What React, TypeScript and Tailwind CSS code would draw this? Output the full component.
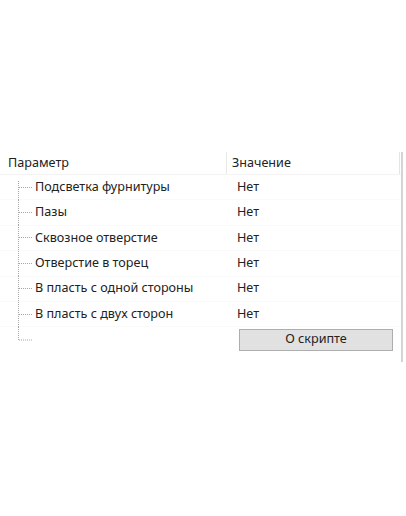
import React from "react"

const rows = [
  "Подсветка фурнитуры",
  "Пазы",
  "Сквозное отверстие",
  "Отверстие в торец",
  "В пласть с одной стороны",
  "В пласть с двух сторон",
]

const font = { fontFamily: '"Noto Sans", "Open Sans", sans-serif' }

// dotted tree connector drawn for one row
function Branch({ first }: { first?: boolean }) {
  return (
    <svg width="34" height="25" className="shrink-0 block">
      <line
        x1="18.5"
        y1={first ? 6 : 0}
        x2="18.5"
        y2={25}
        stroke="#a8a8a8"
        strokeDasharray="1 1"
      />
      <line x1="19" y1="12.5" x2="32" y2="12.5" stroke="#a8a8a8" strokeDasharray="1 1" />
    </svg>
  )
}

export default function App() {
  return (
    <div className="min-h-screen bg-white pt-[152px] text-[12.6px] text-[#222]" style={font}>
      <div className="w-[403px] border-r-2 border-[#d4d4d4]">
        {/* header */}
        <div className="flex h-[23px] items-center border-b border-[#f3f3f3]">
          <div className="w-[227px] h-full flex items-center pl-[8px] border-r border-[#e8e8e8]">
            Параметр
          </div>
          <div className="w-[173px] h-full flex items-center pl-[5px] border-r border-[#e4e4e4]">
            Значение
          </div>
        </div>

        {rows.map((r, i) => (
          <div key={r} className="flex h-[25.4px] items-center border-b border-[#fafafa]">
            <div className="w-[227px] flex items-center">
              <Branch first={i === 0} />
              <span className="ml-[1px]">{r}</span>
            </div>
            <div className="pl-[10px]">Нет</div>
          </div>
        ))}

        {/* last row with button */}
        <div className="flex h-[25px] items-center">
          <div className="w-[227px] flex items-center">
            <svg width="34" height="25" className="shrink-0 block">
              <line x1="18.5" y1="0" x2="18.5" y2="13" stroke="#a8a8a8" strokeDasharray="1 1" />
              <line x1="19" y1="13" x2="33" y2="13" stroke="#a8a8a8" strokeDasharray="1 1" />
            </svg>
          </div>
          <button className="ml-[12px] w-[154px] h-[22px] bg-[#e1e1e1] border border-[#adadad] flex items-center justify-center text-[12.6px] text-[#222]">
            О скрипте
          </button>
        </div>
        <div className="h-[10px]" />
      </div>
    </div>
  )
}
